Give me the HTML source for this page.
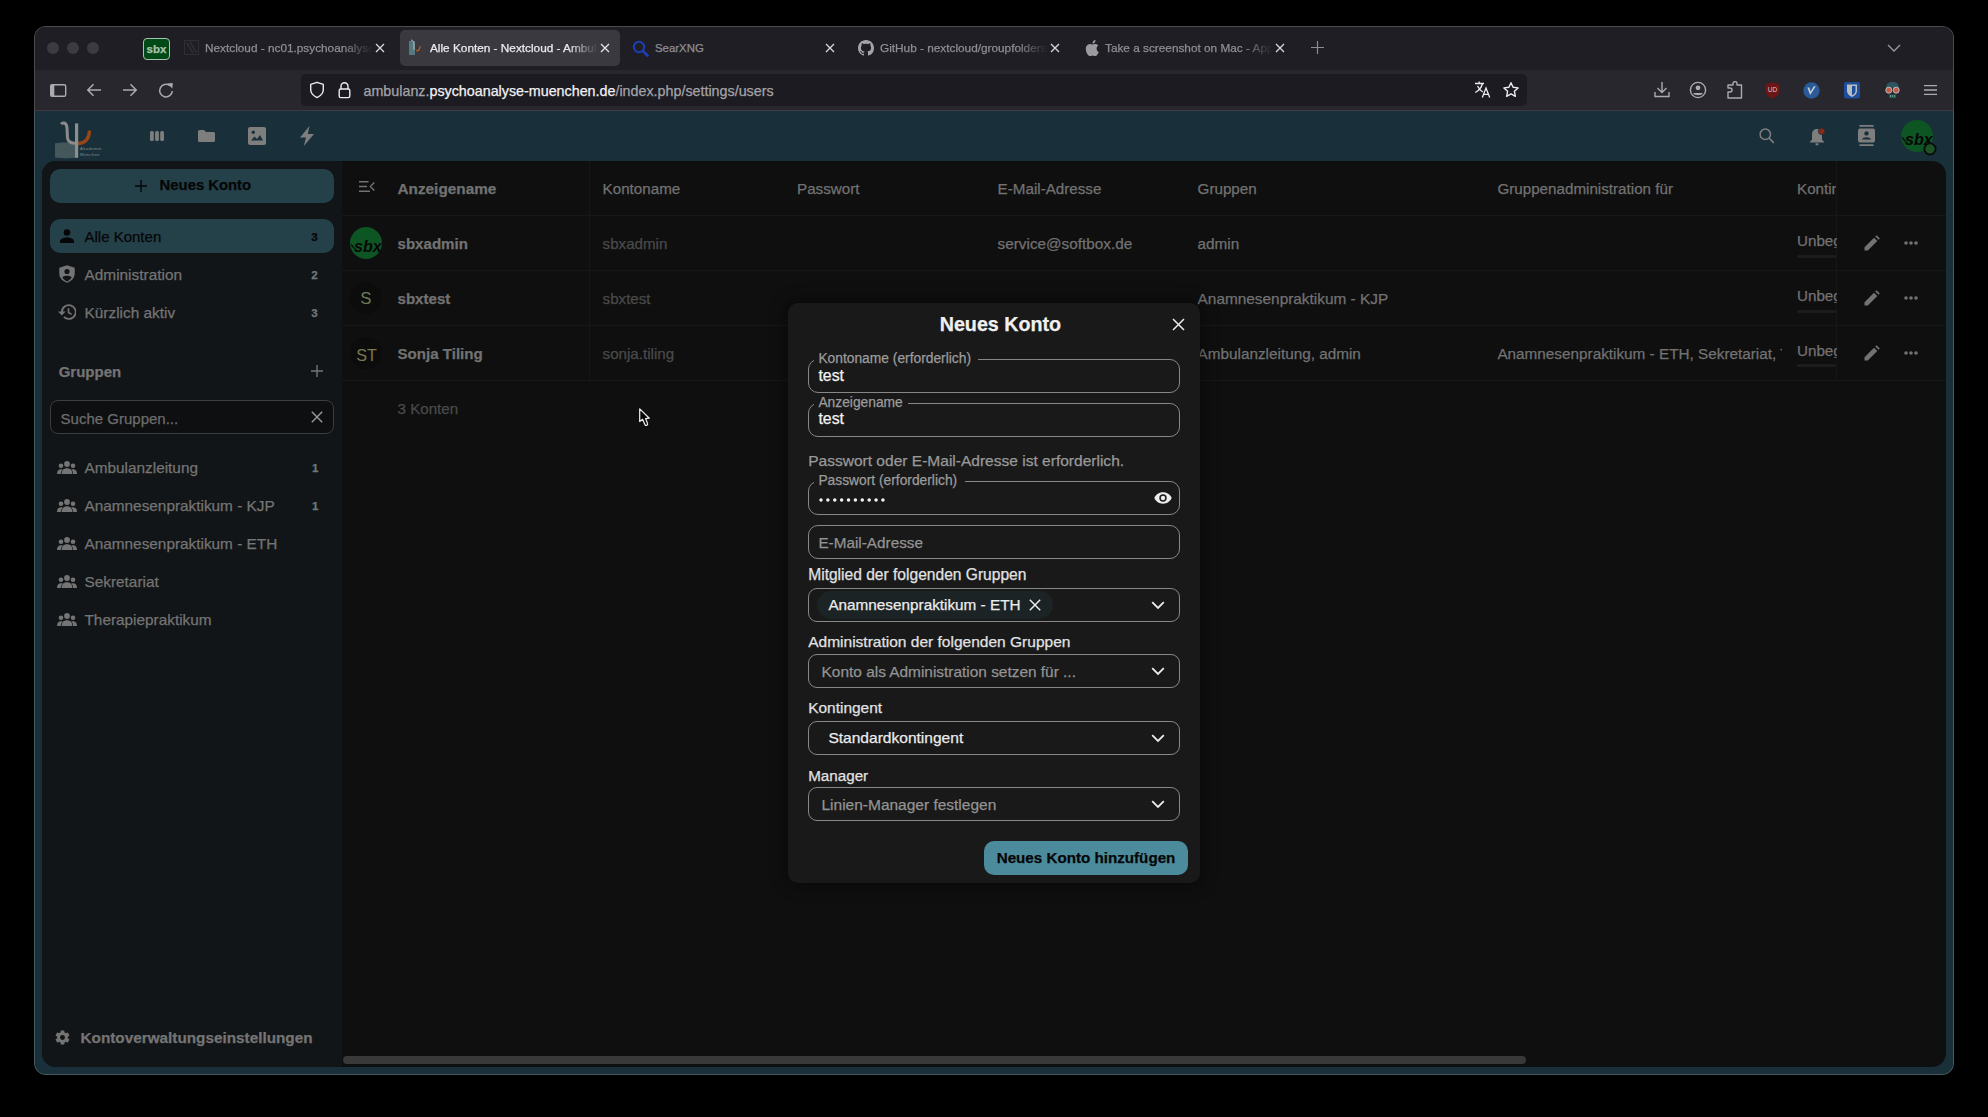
<!DOCTYPE html>
<html><head><meta charset="utf-8">
<style>
*{box-sizing:border-box;margin:0;padding:0}
html,body{width:1988px;height:1117px;overflow:hidden;background:#000}
body{font-family:"Liberation Sans",sans-serif;position:relative}
.a{position:absolute}
.t{position:absolute;white-space:nowrap;line-height:1;-webkit-text-stroke:0.25px currentColor}
.fade{overflow:hidden;-webkit-mask-image:linear-gradient(to right,#000 82%,transparent 100%);mask-image:linear-gradient(to right,#000 82%,transparent 100%)}
</style></head><body>
<div class="a" style="left:34px;top:26px;width:1920px;height:1049px;background:linear-gradient(#1f1e25 0 85px,#19303a 85px) border-box;border-radius:12px;border:1px solid rgba(255,255,255,0.2)"></div>
<div class="a" style="left:35px;top:27px;width:1918px;height:43px;background:#1f1e25;border-radius:11px 11px 0 0"></div>
<div class="a" style="left:35px;top:70px;width:1918px;height:41px;background:#28272e;"></div>
<div class="a" style="left:35px;top:110px;width:1918px;height:1px;background:#3d3a44;"></div>
<div class="a" style="left:47px;top:42px;width:12px;height:12px;background:#3c3b41;border-radius:50%"></div>
<div class="a" style="left:67px;top:42px;width:12px;height:12px;background:#3c3b41;border-radius:50%"></div>
<div class="a" style="left:87px;top:42px;width:12px;height:12px;background:#3c3b41;border-radius:50%"></div>
<div class="a" style="left:143px;top:38px;width:27px;height:22px;background:#004a17;border-radius:4px;border:1px solid #a6c3ab"></div>
<div class="t" style="left:146.5px;top:43.57px;font-size:11.5px;color:#a9c2ad;font-weight:bold;">sbx</div>
<svg class="a" style="left:184px;top:40px" width="15" height="15" viewBox="0 0 15 15"><rect x="0.5" y="0.5" width="14" height="14" fill="none" stroke="#2e2e33"/><path d="M2.5 2.5 L9 13 M6 2 L12.5 12.5" stroke="#2e2e33" stroke-width="1.6"/></svg>
<div class="t fade" style="left:205px;top:43.01px;font-size:11.8px;color:#8e8e93;width:168px">Nextcloud - nc01.psychoanalyse-muenchen.de</div>
<svg class="a" style="left:374.5px;top:43.0px" width="10" height="10" viewBox="0 0 10 10"><path d="M1 1 L9 9 M9 1 L1 9" stroke="#d8d8dc" stroke-width="1.3"/></svg>
<div class="a" style="left:400px;top:30px;width:220px;height:36px;background:#3a393f;border-radius:5px"></div>
<svg class="a" style="left:408px;top:39px" width="17" height="17" viewBox="0 0 17 17"><rect x="1" y="2" width="6" height="14" fill="#557883"/><path d="M3 1 C5 1 6 3 6 6 V11" fill="none" stroke="#b9b9b9" stroke-width="1"/><path d="M8 12 C11 12 12 10 12 7" fill="none" stroke="#c0601c" stroke-width="1.2"/></svg>
<div class="t fade" style="left:430px;top:43.01px;font-size:11.8px;color:#ececef;width:168px">Alle Konten - Nextcloud - Ambulanz</div>
<svg class="a" style="left:600.0px;top:43.0px" width="10" height="10" viewBox="0 0 10 10"><path d="M1 1 L9 9 M9 1 L1 9" stroke="#e4e4e8" stroke-width="1.3"/></svg>
<svg class="a" style="left:632px;top:40px" width="17" height="17" viewBox="0 0 17 17"><circle cx="7" cy="7" r="5.2" fill="none" stroke="#1d3fb5" stroke-width="2"/><path d="M10.8 10.8 L15.5 15.5" stroke="#1d3fb5" stroke-width="2.6" stroke-linecap="round"/></svg>
<div class="t" style="left:655px;top:43.35px;font-size:11.4px;color:#8e8e93;">SearXNG</div>
<svg class="a" style="left:825.0px;top:43.0px" width="10" height="10" viewBox="0 0 10 10"><path d="M1 1 L9 9 M9 1 L1 9" stroke="#d8d8dc" stroke-width="1.3"/></svg>
<svg class="a" style="left:858px;top:40px" width="16" height="16" viewBox="0 0 16 16"><path fill="#a4a4a9" d="M8 0C3.58 0 0 3.58 0 8c0 3.54 2.29 6.53 5.47 7.59.4.07.55-.17.55-.38 0-.19-.01-.82-.01-1.49-2.01.37-2.53-.49-2.69-.94-.09-.23-.48-.94-.82-1.130-.28-.15-.68-.52-.01-.53.63-.01 1.08.58 1.23.82.72 1.21 1.87.87 2.33.66.07-.52.28-.87.51-1.07-1.78-.2-3.64-.89-3.64-3.950 0-.87.31-1.59.82-2.15-.08-.2-.36-1.02.08-2.12 0 0 .67-.21 2.2.82.64-.18 1.32-.27 2-.27.68 0 1.36.09 2 .27 1.53-1.04 2.2-.82 2.2-.82.44 1.1.16 1.92.08 2.12.51.56.82 1.27.82 2.15 0 3.07-1.87 3.75-3.65 3.95.29.25.54.73.54 1.48 0 1.07-.01 1.93-.01 2.2 0 .21.15.46.55.38A8.013 8.013 0 0016 8c0-4.42-3.58-8-8-8z"/></svg>
<div class="t fade" style="left:880px;top:43.01px;font-size:11.8px;color:#8e8e93;width:168px">GitHub - nextcloud/groupfolders: Admin</div>
<svg class="a" style="left:1050.0px;top:43.0px" width="10" height="10" viewBox="0 0 10 10"><path d="M1 1 L9 9 M9 1 L1 9" stroke="#d8d8dc" stroke-width="1.3"/></svg>
<svg class="a" style="left:1085px;top:40px" width="14" height="16" viewBox="0 0 14 16"><path fill="#9a9a9f" d="M11.6 8.5c0-2 1.6-2.9 1.7-3-1-1.4-2.4-1.6-2.9-1.6-1.2-.1-2.4.7-3 .7-.6 0-1.6-.7-2.6-.7C3.5 4 2.2 4.8 1.5 6.1c-1.4 2.5-.4 6.1 1 8.1.7 1 1.5 2 2.5 2 1 0 1.4-.6 2.6-.6s1.5.6 2.6.6c1.1 0 1.8-1 2.4-2 .8-1.1 1.1-2.2 1.1-2.3-.1 0-2.1-.8-2.1-3.4zM9.7 2.5c.5-.7.9-1.6.8-2.5-.8 0-1.8.5-2.3 1.2-.5.6-.9 1.5-.8 2.4.9.1 1.8-.4 2.3-1.1z"/></svg>
<div class="t fade" style="left:1105px;top:43.01px;font-size:11.8px;color:#8e8e93;width:168px">Take a screenshot on Mac - Apple Support</div>
<svg class="a" style="left:1275.0px;top:43.0px" width="10" height="10" viewBox="0 0 10 10"><path d="M1 1 L9 9 M9 1 L1 9" stroke="#d8d8dc" stroke-width="1.3"/></svg>
<svg class="a" style="left:1311px;top:41px" width="13" height="13" viewBox="0 0 13 13"><path d="M6.5 0 V13 M0 6.5 H13" stroke="#8c8c91" stroke-width="1.2"/></svg>
<svg class="a" style="left:1887px;top:44px" width="14" height="8" viewBox="0 0 14 8"><path d="M1 1 L7 7 L13 1" fill="none" stroke="#9a9aa0" stroke-width="1.3"/></svg>
<svg class="a" style="left:49px;top:83px" width="18" height="15" viewBox="0 0 18 15"><rect x="1.7" y="1.7" width="15" height="11.6" rx="1.6" fill="none" stroke="#ababb0" stroke-width="1.4"/><rect x="1.7" y="1.7" width="3.6" height="11.6" fill="#ababb0"/></svg>
<svg class="a" style="left:86px;top:82px" width="16" height="16" viewBox="0 0 16 16"><path d="M15 8 H1.8 M7.5 2.3 L1.8 8 L7.5 13.7" fill="none" stroke="#ababb0" stroke-width="1.5"/></svg>
<svg class="a" style="left:122px;top:82px" width="16" height="16" viewBox="0 0 16 16"><path d="M1 8 H14.2 M8.5 2.3 L14.2 8 L8.5 13.7" fill="none" stroke="#ababb0" stroke-width="1.5"/></svg>
<svg class="a" style="left:158px;top:82px" width="16" height="17" viewBox="0 0 16 17"><path d="M14.3 9 A6.3 6.3 0 1 1 11.8 3.6" fill="none" stroke="#ababb0" stroke-width="1.5"/><path d="M9.3 1.5 L14.8 1 L14.3 6.5 Z" fill="#ababb0"/></svg>
<div class="a" style="left:301px;top:74px;width:1226px;height:32px;background:#1c1b22;border-radius:5px"></div>
<svg class="a" style="left:309px;top:81px" width="16" height="18" viewBox="0 0 16 18"><path d="M8 1.3 L14.3 3.4 V8.5 C14.3 12.5 11.3 15 8 16.6 C4.7 15 1.7 12.5 1.7 8.5 V3.4 Z" fill="none" stroke="#ececf0" stroke-width="1.4" stroke-linejoin="round"/></svg>
<svg class="a" style="left:337px;top:81px" width="15" height="18" viewBox="0 0 15 18"><path d="M4 8 V5.2 A3.5 3.5 0 0 1 11 5.2 V8" fill="none" stroke="#ececf0" stroke-width="1.4"/><rect x="2.2" y="8" width="10.6" height="8.6" rx="1.6" fill="none" stroke="#ececf0" stroke-width="1.4"/></svg>
<div class="t" style="left:363.5px;top:83.70px;font-size:14.3px;color:#a3a3a8;">ambulanz.<span style="color:#f2f2f4">psychoanalyse-muenchen.de</span>/index.php/settings/users</div>
<svg class="a" style="left:1474px;top:81px" width="18" height="18" viewBox="0 0 18 18"><path d="M1 2.5 H10 M5.2 0.5 V2.5 M8.5 2.5 C7.5 6.5 4 10 1.3 11.5 M3.5 5 C5 8 7 10 8.8 11" fill="none" stroke="#ececf0" stroke-width="1.3"/><path d="M8.3 16.5 L12 7 L15.7 16.5 M9.5 13.4 H14.5" fill="none" stroke="#ececf0" stroke-width="1.3"/></svg>
<svg class="a" style="left:1502px;top:81px" width="18" height="18" viewBox="0 0 18 18"><path d="M9 1.7 L11.1 6.3 L16.1 6.9 L12.4 10.3 L13.4 15.3 L9 12.8 L4.6 15.3 L5.6 10.3 L1.9 6.9 L6.9 6.3 Z" fill="none" stroke="#ececf0" stroke-width="1.4" stroke-linejoin="round"/></svg>
<svg class="a" style="left:1654px;top:81px" width="16" height="17" viewBox="0 0 16 17"><path d="M8 1 V11.5 M3.5 7 L8 11.5 L12.5 7" fill="none" stroke="#ababb0" stroke-width="1.4"/><path d="M1 11 V15.5 H15 V11" fill="none" stroke="#ababb0" stroke-width="1.4"/></svg>
<svg class="a" style="left:1689px;top:81px" width="18" height="18" viewBox="0 0 18 18"><circle cx="9" cy="9" r="7.6" fill="none" stroke="#ababb0" stroke-width="1.4"/><circle cx="9" cy="6.8" r="2.4" fill="#ababb0"/><path d="M4.5 12 H13.5 V13 C12 14.5 6 14.5 4.5 13 Z" fill="#ababb0"/></svg>
<svg class="a" style="left:1727px;top:81px" width="16" height="18" viewBox="0 0 16 18"><path d="M1 17 V11 H3 A2 2 0 0 0 3 7 H1 V4 H6 V2.6 A2 2 0 0 1 10 2.6 V4 H14.5 V17 Z" fill="none" stroke="#ababb0" stroke-width="1.4" stroke-linejoin="round"/></svg>
<svg class="a" style="left:1765px;top:82px" width="15" height="17" viewBox="0 0 15 17"><path d="M7.5 0.3 L14.5 2.5 V8.5 C14.5 12.5 11 15 7.5 16.7 C4 15 0.5 12.5 0.5 8.5 V2.5 Z" fill="#6e1517"/><text x="7.5" y="10.2" font-size="6.5" text-anchor="middle" fill="#d9c8c8" font-family="Liberation Sans">UD</text></svg>
<svg class="a" style="left:1803px;top:82px" width="17" height="17" viewBox="0 0 17 17"><circle cx="8.5" cy="8.5" r="8.2" fill="#295a9a"/><path d="M4.3 5.5 L7.2 13 L12.8 4.3 L10.8 4.3 L7.6 9.5 L6.3 5.5 Z" fill="#c8c8cc"/></svg>
<svg class="a" style="left:1844px;top:82px" width="16" height="17" viewBox="0 0 16 17"><rect x="0" y="0" width="16" height="16.5" rx="2" fill="#1d4e9c"/><path d="M3 2.5 H13 V9 C13 12 10.5 13.8 8 15 C5.5 13.8 3 12 3 9 Z" fill="#b9bcc2"/><path d="M8 4 H11.5 V9 C11.5 11 10 12.3 8 13.2 Z" fill="#1d4e9c"/></svg>
<svg class="a" style="left:1884px;top:81px" width="17" height="18" viewBox="0 0 17 18"><path d="M2 7 C2 2.5 5 1 8.5 1 C12 1 15 2.5 15 7 Z" fill="#2c5560"/><circle cx="4.8" cy="9.2" r="3" fill="#c25a4a" stroke="#bdbdbd" stroke-width="1"/><circle cx="12.2" cy="9.2" r="3" fill="#c25a4a" stroke="#bdbdbd" stroke-width="1"/><rect x="5" y="13.5" width="7" height="3.5" fill="#2c5560"/><path d="M6 15 H11" stroke="#8fb" stroke-width="0.8" stroke-dasharray="1 1"/></svg>
<svg class="a" style="left:1924px;top:85px" width="13" height="10" viewBox="0 0 13 10"><path d="M0 0.7 H13 M0 5 H13 M0 9.3 H13" stroke="#ababb0" stroke-width="1.3"/></svg>
<div class="a" style="left:35px;top:111px;width:1918px;height:963px;background:#19303a;border-radius:0 0 11px 11px"></div>
<svg class="a" style="left:54px;top:121px" width="50" height="38" viewBox="0 0 50 38"><path d="M1 22.3 C6 21.2 15 21.2 21.2 22 V36.7 C15 37.3 6 37.3 1 36.5 Z" fill="#44575a"/>
<path d="M7.2 3.2 C8.5 1.3 11.8 1.2 12.8 5.5 C13.3 8 13.2 14 13.5 17 C14 20.5 16.5 22.3 21.5 22.3" fill="none" stroke="#8b8b8b" stroke-width="3"/>
<path d="M23.5 22.6 C31 22.4 35.2 18 35.5 9.6" fill="none" stroke="#9a4516" stroke-width="3.2"/>
<rect x="21" y="2.4" width="3.2" height="34.4" fill="#8d8d8d"/>
<text x="26" y="29" font-size="4.3" fill="#7d8a8c" font-family="Liberation Sans" textLength="21.5">Akademie</text>
<text x="26" y="34.8" font-size="4.3" fill="#7d8a8c" font-family="Liberation Sans" textLength="19.5">München</text></svg>
<svg class="a" style="left:150px;top:131px" width="14" height="10" viewBox="0 0 14 10"><rect x="0" y="0" width="3.8" height="10" rx="1.5" fill="#7e7e7e"/><rect x="5.1" y="0" width="3.8" height="10" rx="1.5" fill="#7e7e7e"/><rect x="10.2" y="0" width="3.8" height="10" rx="1.5" fill="#7e7e7e"/></svg>
<svg class="a" style="left:198px;top:130px" width="17" height="12" viewBox="0 0 17 12"><path d="M0 1.5 Q0 0 1.5 0 H6 L8 2 H15.5 Q17 2 17 3.5 V10.5 Q17 12 15.5 12 H1.5 Q0 12 0 10.5 Z" fill="#7e7e7e"/></svg>
<svg class="a" style="left:248px;top:127px" width="18" height="18" viewBox="0 0 18 18"><rect x="0" y="0" width="18" height="18" rx="2" fill="#7e7e7e"/><circle cx="5.3" cy="5.3" r="1.7" fill="#19303a"/><path d="M3 13.5 L6.5 9.5 L9 12 L12 8 L15 13.5 Z" fill="#19303a"/></svg>
<svg class="a" style="left:299px;top:126px" width="16" height="20" viewBox="0 0 16 20"><path d="M10.5 0 L1 11.5 H7 L4.8 20 L15 8 H8.8 Z" fill="#7e7e7e"/></svg>
<svg class="a" style="left:1759px;top:128px" width="16" height="16" viewBox="0 0 16 16"><circle cx="6.3" cy="6.3" r="5.2" fill="none" stroke="#7e7e7e" stroke-width="1.5"/><path d="M10 10 L14.8 14.8" stroke="#7e7e7e" stroke-width="1.7"/></svg>
<svg class="a" style="left:1809px;top:127px" width="16" height="19" viewBox="0 0 16 19"><path d="M8 2 C4.5 2 3 4.5 3 8 V12.5 L0.5 15.5 H15.5 L13 12.5 V8 C13 4.5 11.5 2 8 2 Z" fill="#7e7e7e"/><rect x="6.6" y="16.3" width="2.8" height="2" fill="#7e7e7e"/><circle cx="12.7" cy="4.3" r="3.3" fill="#8a2717" stroke="#19303a" stroke-width="0.8"/></svg>
<svg class="a" style="left:1858px;top:125px" width="17" height="21" viewBox="0 0 17 21"><rect x="1.2" y="0" width="14.6" height="1.8" rx="0.9" fill="#7e7e7e"/><rect x="1.2" y="19.2" width="14.6" height="1.8" rx="0.9" fill="#7e7e7e"/><rect x="0" y="3.6" width="17" height="14" rx="2" fill="#7e7e7e"/><circle cx="8.5" cy="8.4" r="2.2" fill="#19303a"/><path d="M4 14.5 C4.5 11.5 12.5 11.5 13 14.5 Z" fill="#19303a"/></svg>
<svg class="a" style="left:1899px;top:118px" width="40" height="40" viewBox="0 0 40 40"><circle cx="18" cy="18" r="16" fill="#0e5524"/><text x="19.8" y="26.5" font-size="16" font-style="italic" font-weight="bold" fill="#070707" text-anchor="middle" font-family="Liberation Sans">sbx</text><path d="M2.3 18.5 C4 22.5 6.5 24.8 10 25.3 C7.5 23.8 6 22.5 5 20.5 Z" fill="#070707"/><circle cx="31" cy="31" r="5.6" fill="#1c5226" stroke="#0b0b0b" stroke-width="1.8"/></svg>
<div class="a" style="left:42px;top:161px;width:1904px;height:906px;border-radius:14px;background:#0f0f0f;overflow:hidden"><div class="a" style="left:0;top:0;width:300px;height:906px;background:#121517"></div></div>
<div class="a" style="left:50px;top:169px;width:284px;height:34px;background:#244049;border-radius:10px"></div>
<svg class="a" style="left:135px;top:180px" width="12" height="12" viewBox="0 0 12 12"><path d="M6 0 V12 M0 6 H12" stroke="#060606" stroke-width="1.4"/></svg>
<div class="t" style="left:159.6px;top:178.23px;font-size:14.85px;color:#060606;font-weight:bold;">Neues Konto</div>
<div class="a" style="left:50px;top:219px;width:284px;height:34px;background:#244049;border-radius:10px"></div>
<svg class="a" style="left:60px;top:229px" width="14" height="14" viewBox="0 0 14 14"><circle cx="7" cy="3.5" r="3.3" fill="#060606"/><path d="M0 14 V12.5 C0 9.5 4 8.5 7 8.5 C10 8.5 14 9.5 14 12.5 V14 Z" fill="#060606"/></svg>
<div class="t" style="left:84.5px;top:229.40px;font-size:15.0px;color:#060606;">Alle Konten</div>
<div class="t" style="left:311.3px;top:231.48px;font-size:11.6px;color:#060606;font-weight:bold;">3</div>
<svg class="a" style="left:59px;top:265px" width="16" height="18" viewBox="0 0 16 18"><path d="M8 0.3 L15.7 2.8 V8.5 C15.7 13 12.5 16 8 17.8 C3.5 16 0.3 13 0.3 8.5 V2.8 Z" fill="#747474"/><circle cx="8" cy="6.5" r="2.6" fill="#121517"/><path d="M3.3 12.6 C4.3 10.2 11.7 10.2 12.7 12.6 C11.5 14.5 10 15.6 8 16.4 C6 15.6 4.5 14.5 3.3 12.6 Z" fill="#121517"/></svg>
<div class="t" style="left:84.5px;top:266.86px;font-size:15.4px;color:#747474;">Administration</div>
<div class="t" style="left:311.3px;top:269.28px;font-size:11.6px;color:#6e787c;font-weight:bold;">2</div>
<svg class="a" style="left:58px;top:304px" width="18" height="16" viewBox="0 0 18 16"><path d="M3.9 8 A6.9 6.9 0 1 1 5.9 12.9" fill="none" stroke="#747474" stroke-width="1.8"/><path d="M0 7.6 H7.6 L3.8 11.6 Z" fill="#747474"/><path d="M10.5 4.3 V8.5 L13.6 10.4" fill="none" stroke="#747474" stroke-width="1.6"/></svg>
<div class="t" style="left:84.5px;top:304.86px;font-size:15.4px;color:#747474;">Kürzlich aktiv</div>
<div class="t" style="left:311.3px;top:307.28px;font-size:11.6px;color:#6e787c;font-weight:bold;">3</div>
<div class="t" style="left:58.7px;top:364.10px;font-size:15.0px;color:#747474;font-weight:bold;">Gruppen</div>
<svg class="a" style="left:311px;top:365px" width="12" height="12" viewBox="0 0 12 12"><path d="M6 0 V12 M0 6 H12" stroke="#747474" stroke-width="1.4"/></svg>
<div class="a" style="left:50px;top:400px;width:284px;height:34px;background:#0e0f10;border-radius:8px;border:1px solid #3b3d3f"></div>
<div class="t" style="left:60.6px;top:410.60px;font-size:15.0px;color:#6d6d6d;">Suche Gruppen...</div>
<svg class="a" style="left:311px;top:411px" width="12" height="12" viewBox="0 0 12 12"><path d="M0.8 0.8 L11.2 11.2 M11.2 0.8 L0.8 11.2" stroke="#9a9a9a" stroke-width="1.4"/></svg>
<svg class="a" style="left:57px;top:461px" width="20" height="13" viewBox="0 0 20 13"><circle cx="10" cy="3" r="2.9" fill="#747474"/><circle cx="4" cy="4.8" r="2.3" fill="#747474"/><circle cx="16" cy="4.8" r="2.3" fill="#747474"/><path d="M4.6 13 C4.6 9.4 6.6 7.3 10 7.3 C13.4 7.3 15.4 9.4 15.4 13 Z" fill="#747474"/><path d="M0 13 C0 10 1.4 8.2 4 8.2 C4.8 8.2 5.3 8.4 5.7 8.6 C4.4 9.9 3.9 11.4 3.9 13 Z" fill="#747474"/><path d="M20 13 C20 10 18.6 8.2 16 8.2 C15.2 8.2 14.7 8.4 14.3 8.6 C15.6 9.9 16.1 11.4 16.1 13 Z" fill="#747474"/></svg>
<div class="t" style="left:84.5px;top:460.01px;font-size:15.35px;color:#747474;">Ambulanzleitung</div>
<div class="t" style="left:312px;top:462.38px;font-size:11.6px;color:#6e787c;font-weight:bold;">1</div>
<svg class="a" style="left:57px;top:499px" width="20" height="13" viewBox="0 0 20 13"><circle cx="10" cy="3" r="2.9" fill="#747474"/><circle cx="4" cy="4.8" r="2.3" fill="#747474"/><circle cx="16" cy="4.8" r="2.3" fill="#747474"/><path d="M4.6 13 C4.6 9.4 6.6 7.3 10 7.3 C13.4 7.3 15.4 9.4 15.4 13 Z" fill="#747474"/><path d="M0 13 C0 10 1.4 8.2 4 8.2 C4.8 8.2 5.3 8.4 5.7 8.6 C4.4 9.9 3.9 11.4 3.9 13 Z" fill="#747474"/><path d="M20 13 C20 10 18.6 8.2 16 8.2 C15.2 8.2 14.7 8.4 14.3 8.6 C15.6 9.9 16.1 11.4 16.1 13 Z" fill="#747474"/></svg>
<div class="t" style="left:84.5px;top:498.01px;font-size:15.35px;color:#747474;">Anamnesenpraktikum - KJP</div>
<div class="t" style="left:312px;top:500.38px;font-size:11.6px;color:#6e787c;font-weight:bold;">1</div>
<svg class="a" style="left:57px;top:537px" width="20" height="13" viewBox="0 0 20 13"><circle cx="10" cy="3" r="2.9" fill="#747474"/><circle cx="4" cy="4.8" r="2.3" fill="#747474"/><circle cx="16" cy="4.8" r="2.3" fill="#747474"/><path d="M4.6 13 C4.6 9.4 6.6 7.3 10 7.3 C13.4 7.3 15.4 9.4 15.4 13 Z" fill="#747474"/><path d="M0 13 C0 10 1.4 8.2 4 8.2 C4.8 8.2 5.3 8.4 5.7 8.6 C4.4 9.9 3.9 11.4 3.9 13 Z" fill="#747474"/><path d="M20 13 C20 10 18.6 8.2 16 8.2 C15.2 8.2 14.7 8.4 14.3 8.6 C15.6 9.9 16.1 11.4 16.1 13 Z" fill="#747474"/></svg>
<div class="t" style="left:84.5px;top:536.01px;font-size:15.35px;color:#747474;">Anamnesenpraktikum - ETH</div>
<svg class="a" style="left:57px;top:575px" width="20" height="13" viewBox="0 0 20 13"><circle cx="10" cy="3" r="2.9" fill="#747474"/><circle cx="4" cy="4.8" r="2.3" fill="#747474"/><circle cx="16" cy="4.8" r="2.3" fill="#747474"/><path d="M4.6 13 C4.6 9.4 6.6 7.3 10 7.3 C13.4 7.3 15.4 9.4 15.4 13 Z" fill="#747474"/><path d="M0 13 C0 10 1.4 8.2 4 8.2 C4.8 8.2 5.3 8.4 5.7 8.6 C4.4 9.9 3.9 11.4 3.9 13 Z" fill="#747474"/><path d="M20 13 C20 10 18.6 8.2 16 8.2 C15.2 8.2 14.7 8.4 14.3 8.6 C15.6 9.9 16.1 11.4 16.1 13 Z" fill="#747474"/></svg>
<div class="t" style="left:84.5px;top:574.01px;font-size:15.35px;color:#747474;">Sekretariat</div>
<svg class="a" style="left:57px;top:613px" width="20" height="13" viewBox="0 0 20 13"><circle cx="10" cy="3" r="2.9" fill="#747474"/><circle cx="4" cy="4.8" r="2.3" fill="#747474"/><circle cx="16" cy="4.8" r="2.3" fill="#747474"/><path d="M4.6 13 C4.6 9.4 6.6 7.3 10 7.3 C13.4 7.3 15.4 9.4 15.4 13 Z" fill="#747474"/><path d="M0 13 C0 10 1.4 8.2 4 8.2 C4.8 8.2 5.3 8.4 5.7 8.6 C4.4 9.9 3.9 11.4 3.9 13 Z" fill="#747474"/><path d="M20 13 C20 10 18.6 8.2 16 8.2 C15.2 8.2 14.7 8.4 14.3 8.6 C15.6 9.9 16.1 11.4 16.1 13 Z" fill="#747474"/></svg>
<div class="t" style="left:84.5px;top:612.01px;font-size:15.35px;color:#747474;">Therapiepraktikum</div>
<svg class="a" style="left:54px;top:1029px" width="17" height="17" viewBox="0 0 24 24"><path fill="#747474" d="M12 15.5A3.5 3.5 0 0 1 8.5 12 3.5 3.5 0 0 1 12 8.5a3.5 3.5 0 0 1 3.5 3.5 3.5 3.5 0 0 1-3.5 3.5m7.43-2.53c.04-.32.07-.64.07-.97s-.03-.66-.07-1l2.11-1.63c.19-.15.24-.42.12-.64l-2-3.46c-.12-.22-.39-.31-.61-.22l-2.49 1c-.52-.39-1.06-.73-1.690-.98l-.37-2.65A.506.506 0 0 0 14 2h-4c-.25 0-.46.18-.5.42l-.37 2.65c-.63.25-1.17.59-1.69.98l-2.49-1c-.22-.09-.49 0-.61.22l-2 3.46c-.13.22-.07.49.12.64L4.57 11c-.04.34-.07.67-.07 1s.03.65.07.97l-2.11 1.66c-.19.15-.25.42-.12.64l2 3.460c.12.22.39.3.61.22l2.49-1.01c.52.4 1.06.74 1.69.99l.37 2.65c.04.24.25.42.5.42h4c.25 0 .46-.18.5-.42l.37-2.65c.63-.26 1.17-.59 1.69-.99l2.49 1.01c.22.08.49 0 .61-.22l2-3.46c.12-.22.07-.49-.12-.64l-2.11-1.66Z"/></svg>
<div class="t" style="left:80.5px;top:1029.85px;font-size:15.3px;color:#747474;font-weight:bold;">Kontoverwaltungseinstellungen</div>
<svg class="a" style="left:359px;top:181px" width="16" height="11" viewBox="0 0 16 11"><path d="M0 0.8 H9.5 M0 5.5 H8 M0 10.2 H11 M15.3 1.5 L11.3 5.5 L15.3 9.5" fill="none" stroke="#727272" stroke-width="1.4"/></svg>
<div class="t" style="left:397.5px;top:180.92px;font-size:15.33px;color:#727272;font-weight:bold;">Anzeigename</div>
<div class="t" style="left:602.6px;top:181.23px;font-size:15.2px;color:#727272;">Kontoname</div>
<div class="t" style="left:797px;top:181.23px;font-size:15.2px;color:#727272;">Passwort</div>
<div class="t" style="left:997.6px;top:181.23px;font-size:15.2px;color:#727272;">E-Mail-Adresse</div>
<div class="t" style="left:1197.6px;top:181.23px;font-size:15.2px;color:#727272;">Gruppen</div>
<div class="t" style="left:1497.4px;top:181.23px;font-size:15.2px;color:#727272;">Gruppenadministration für</div>
<div class="t" style="left:1797px;top:181.23px;font-size:15.2px;color:#727272;width:39.5px;overflow:hidden">Kontingent</div>
<div class="a" style="left:342px;top:215px;width:1604px;height:1px;background:#171717;"></div>
<div class="a" style="left:342px;top:270px;width:1604px;height:1px;background:#171717;"></div>
<div class="a" style="left:342px;top:325px;width:1604px;height:1px;background:#171717;"></div>
<div class="a" style="left:342px;top:380px;width:1604px;height:1px;background:#171717;"></div>
<div class="a" style="left:589px;top:161px;width:1px;height:219px;background:#161616;"></div>
<div class="a" style="left:1836px;top:161px;width:1px;height:219px;background:#161616;"></div>
<svg class="a" style="left:350px;top:227px" width="32" height="32" viewBox="0 0 32 32"><circle cx="16" cy="16" r="16" fill="#0e5524"/><text x="17.8" y="24.5" font-size="16" font-style="italic" font-weight="bold" fill="#070707" text-anchor="middle" font-family="Liberation Sans">sbx</text><path d="M0.3 16.5 C2 20.5 4.5 22.8 8 23.3 C5.5 21.8 4 20.5 3 18.5 Z" fill="#070707"/></svg>
<div class="t" style="left:397.5px;top:236.02px;font-size:15.1px;color:#727272;font-weight:bold;">sbxadmin</div>
<div class="t" style="left:602.6px;top:235.98px;font-size:15.15px;color:#4a4a4a;">sbxadmin</div>
<div class="t" style="left:997.6px;top:236.05px;font-size:15.3px;color:#727272;">service@softbox.de</div>
<div class="t" style="left:1197.6px;top:236.05px;font-size:15.3px;color:#727272;">admin</div>
<div class="a" style="left:350px;top:282px;width:32px;height:32px;background:#0b0c0b;border-radius:50%"></div>
<div class="t" style="left:360.3px;top:291.08px;font-size:16.8px;color:#6c7c56;-webkit-text-stroke:0">S</div>
<div class="t" style="left:397.5px;top:291.02px;font-size:15.1px;color:#727272;font-weight:bold;">sbxtest</div>
<div class="t" style="left:602.6px;top:290.98px;font-size:15.15px;color:#4a4a4a;">sbxtest</div>
<div class="t" style="left:1197.6px;top:290.98px;font-size:15.38px;color:#727272;">Anamnesenpraktikum - KJP</div>
<div class="a" style="left:350px;top:337px;width:32px;height:32px;background:#0b0c0b;border-radius:50%"></div>
<div class="t" style="left:356.2px;top:346.59px;font-size:16.2px;color:#7d7853;-webkit-text-stroke:0">ST</div>
<div class="t" style="left:397.5px;top:346.02px;font-size:15.1px;color:#727272;font-weight:bold;">Sonja Tiling</div>
<div class="t" style="left:602.6px;top:345.98px;font-size:15.15px;color:#4a4a4a;">sonja.tiling</div>
<div class="t" style="left:1197.6px;top:346.05px;font-size:15.3px;color:#727272;">Ambulanzleitung, admin</div>
<div class="t" style="left:1497.4px;top:346.35px;font-size:15.3px;color:#727272;width:285px;overflow:hidden">Anamnesenpraktikum - ETH, Sekretariat, Therapiepraktikum</div>
<div class="t" style="left:397.5px;top:400.98px;font-size:15.15px;color:#4a4a4a;">3 Konten</div>
<div class="t" style="left:1797px;top:232.73px;font-size:15.2px;color:#727272;width:39.5px;overflow:hidden">Unbegrenzt</div>
<div class="a" style="left:1797px;top:255px;width:39px;height:3px;background:#1c1c1c;border-radius:1.5px"></div>
<svg class="a" style="left:1864px;top:235px" width="16" height="16" viewBox="0 0 16 16"><path d="M0.5 15.5 V12.2 L10 2.7 L13.3 6 L3.8 15.5 Z M11.2 1.5 L12.6 0.2 L15.8 3.4 L14.5 4.8 Z" fill="#727272"/></svg>
<svg class="a" style="left:1904px;top:241px" width="14" height="4" viewBox="0 0 14 4"><circle cx="2" cy="2" r="1.8" fill="#727272"/><circle cx="7" cy="2" r="1.8" fill="#727272"/><circle cx="12" cy="2" r="1.8" fill="#727272"/></svg>
<div class="t" style="left:1797px;top:287.73px;font-size:15.2px;color:#727272;width:39.5px;overflow:hidden">Unbegrenzt</div>
<div class="a" style="left:1797px;top:310px;width:39px;height:3px;background:#1c1c1c;border-radius:1.5px"></div>
<svg class="a" style="left:1864px;top:290px" width="16" height="16" viewBox="0 0 16 16"><path d="M0.5 15.5 V12.2 L10 2.7 L13.3 6 L3.8 15.5 Z M11.2 1.5 L12.6 0.2 L15.8 3.4 L14.5 4.8 Z" fill="#727272"/></svg>
<svg class="a" style="left:1904px;top:296px" width="14" height="4" viewBox="0 0 14 4"><circle cx="2" cy="2" r="1.8" fill="#727272"/><circle cx="7" cy="2" r="1.8" fill="#727272"/><circle cx="12" cy="2" r="1.8" fill="#727272"/></svg>
<div class="t" style="left:1797px;top:342.63px;font-size:15.2px;color:#727272;width:39.5px;overflow:hidden">Unbegrenzt</div>
<div class="a" style="left:1797px;top:364px;width:39px;height:3px;background:#1c1c1c;border-radius:1.5px"></div>
<svg class="a" style="left:1864px;top:345px" width="16" height="16" viewBox="0 0 16 16"><path d="M0.5 15.5 V12.2 L10 2.7 L13.3 6 L3.8 15.5 Z M11.2 1.5 L12.6 0.2 L15.8 3.4 L14.5 4.8 Z" fill="#727272"/></svg>
<svg class="a" style="left:1904px;top:351px" width="14" height="4" viewBox="0 0 14 4"><circle cx="2" cy="2" r="1.8" fill="#727272"/><circle cx="7" cy="2" r="1.8" fill="#727272"/><circle cx="12" cy="2" r="1.8" fill="#727272"/></svg>
<div class="a" style="left:343px;top:1056px;width:1183px;height:8px;background:#393939;border-radius:4px"></div>
<svg class="a" style="left:637px;top:407px" width="14" height="21" viewBox="0 0 14 21"><path d="M2.7 1.9 V14.6 L5.6 12.3 L7.9 17.6 Q8.6 18.9 9.9 18.2 Q11 17.5 10.5 16.4 L8.6 11.6 L12.3 11.2 Z" fill="#050505" stroke="#ececec" stroke-width="1.25" stroke-linejoin="round"/></svg>
<div class="a" style="left:788px;top:303px;width:412px;height:580px;background:#191919;border-radius:10px;box-shadow:0 0 16px 3px rgba(0,0,0,0.4)"></div>
<div class="t" style="left:939.7px;top:315.42px;font-size:19.7px;color:#f0f0f0;font-weight:bold;">Neues Konto</div>
<svg class="a" style="left:1172px;top:318px" width="13" height="13" viewBox="0 0 13 13"><path d="M1 1 L12 12 M12 1 L1 12" stroke="#ececec" stroke-width="1.5"/></svg>
<div class="a" style="left:808px;top:359px;width:372px;height:34px;background:transparent;border:1px solid #878787;border-radius:10px"></div>
<div class="a" style="left:814px;top:357px;width:164.20000000000005px;height:4px;background:#191919;"></div>
<div class="t" style="left:818.4px;top:352.32px;font-size:13.8px;color:#9c9c9c;">Kontoname (erforderlich)</div>
<div class="t" style="left:818.4px;top:367.76px;font-size:15.88px;color:#f2f2f2;">test</div>
<div class="a" style="left:808px;top:403px;width:372px;height:34px;background:transparent;border:1px solid #878787;border-radius:10px"></div>
<div class="a" style="left:814px;top:401px;width:93.79062499999998px;height:4px;background:#191919;"></div>
<div class="t" style="left:818.4px;top:396.12px;font-size:13.8px;color:#9c9c9c;">Anzeigename</div>
<div class="t" style="left:818.4px;top:410.96px;font-size:15.88px;color:#f2f2f2;">test</div>
<div class="t" style="left:808.2px;top:452.85px;font-size:15.54px;color:#999999;">Passwort oder E-Mail-Adresse ist erforderlich.</div>
<div class="a" style="left:808px;top:481px;width:372px;height:34px;background:transparent;border:1px solid #878787;border-radius:10px"></div>
<div class="a" style="left:814px;top:479px;width:151px;height:4px;background:#191919;"></div>
<div class="t" style="left:818.4px;top:474.12px;font-size:13.8px;color:#9c9c9c;">Passwort (erforderlich)</div>
<svg class="a" style="left:819px;top:498px" width="66" height="4" viewBox="0 0 66 4"><circle cx="2.00" cy="2" r="1.75" fill="#f2f2f2"/><circle cx="8.88" cy="2" r="1.75" fill="#f2f2f2"/><circle cx="15.76" cy="2" r="1.75" fill="#f2f2f2"/><circle cx="22.64" cy="2" r="1.75" fill="#f2f2f2"/><circle cx="29.52" cy="2" r="1.75" fill="#f2f2f2"/><circle cx="36.40" cy="2" r="1.75" fill="#f2f2f2"/><circle cx="43.28" cy="2" r="1.75" fill="#f2f2f2"/><circle cx="50.16" cy="2" r="1.75" fill="#f2f2f2"/><circle cx="57.04" cy="2" r="1.75" fill="#f2f2f2"/><circle cx="63.92" cy="2" r="1.75" fill="#f2f2f2"/></svg>
<svg class="a" style="left:1154px;top:492px" width="18" height="12" viewBox="0 0 18 12"><path d="M9 0.3 C4.7 0.3 1.6 3 0.3 6 C1.6 9 4.7 11.7 9 11.7 C13.3 11.7 16.4 9 17.7 6 C16.4 3 13.3 0.3 9 0.3 Z" fill="#ececec"/><circle cx="9" cy="6" r="3.7" fill="#191919"/><circle cx="9" cy="6" r="2.2" fill="#ececec"/></svg>
<div class="a" style="left:808px;top:525px;width:372px;height:34px;background:transparent;border:1px solid #878787;border-radius:10px"></div>
<div class="t" style="left:818.4px;top:535.45px;font-size:15.3px;color:#939393;">E-Mail-Adresse</div>
<div class="t" style="left:808.2px;top:567.00px;font-size:15.59px;color:#e2e2e2;">Mitglied der folgenden Gruppen</div>
<div class="a" style="left:808px;top:588px;width:372px;height:34px;background:transparent;border:1px solid #878787;border-radius:9px"></div>
<svg class="a" style="left:1151px;top:601px" width="14" height="9" viewBox="0 0 14 9"><path d="M1.2 1.2 L7 7 L12.8 1.2" fill="none" stroke="#ececec" stroke-width="1.8"/></svg>
<div class="a" style="left:816.5px;top:591px;width:236px;height:28px;background:#1c2325;border-radius:14px"></div>
<div class="t" style="left:828.4px;top:597.44px;font-size:15.31px;color:#ececec;">Anamnesenpraktikum - ETH</div>
<svg class="a" style="left:1029px;top:599px" width="12" height="12" viewBox="0 0 12 12"><path d="M0.8 0.8 L11.2 11.2 M11.2 0.8 L0.8 11.2" stroke="#ececec" stroke-width="1.5"/></svg>
<div class="t" style="left:808.2px;top:633.76px;font-size:15.52px;color:#e2e2e2;">Administration der folgenden Gruppen</div>
<div class="a" style="left:808px;top:654px;width:372px;height:34px;background:transparent;border:1px solid #878787;border-radius:9px"></div>
<svg class="a" style="left:1151px;top:667px" width="14" height="9" viewBox="0 0 14 9"><path d="M1.2 1.2 L7 7 L12.8 1.2" fill="none" stroke="#ececec" stroke-width="1.8"/></svg>
<div class="t" style="left:821.6px;top:664.05px;font-size:15.42px;color:#939393;">Konto als Administration setzen für ...</div>
<div class="t" style="left:808.2px;top:700.21px;font-size:15.46px;color:#e2e2e2;">Kontingent</div>
<div class="a" style="left:808px;top:721px;width:372px;height:34px;background:transparent;border:1px solid #878787;border-radius:9px"></div>
<svg class="a" style="left:1151px;top:734px" width="14" height="9" viewBox="0 0 14 9"><path d="M1.2 1.2 L7 7 L12.8 1.2" fill="none" stroke="#ececec" stroke-width="1.8"/></svg>
<div class="t" style="left:828.4px;top:730.14px;font-size:15.55px;color:#ececec;">Standardkontingent</div>
<div class="t" style="left:808.2px;top:767.53px;font-size:15.2px;color:#e2e2e2;">Manager</div>
<div class="a" style="left:808px;top:787px;width:372px;height:34px;background:transparent;border:1px solid #878787;border-radius:9px"></div>
<svg class="a" style="left:1151px;top:800px" width="14" height="9" viewBox="0 0 14 9"><path d="M1.2 1.2 L7 7 L12.8 1.2" fill="none" stroke="#ececec" stroke-width="1.8"/></svg>
<div class="t" style="left:821.5px;top:797.09px;font-size:15.49px;color:#939393;">Linien-Manager festlegen</div>
<div class="a" style="left:984px;top:841px;width:204px;height:34px;background:#4b8b9c;border-radius:10px"></div>
<div class="t" style="left:996.7px;top:849.95px;font-size:15.18px;color:#060606;font-weight:bold;">Neues Konto hinzufügen</div>
</body></html>
